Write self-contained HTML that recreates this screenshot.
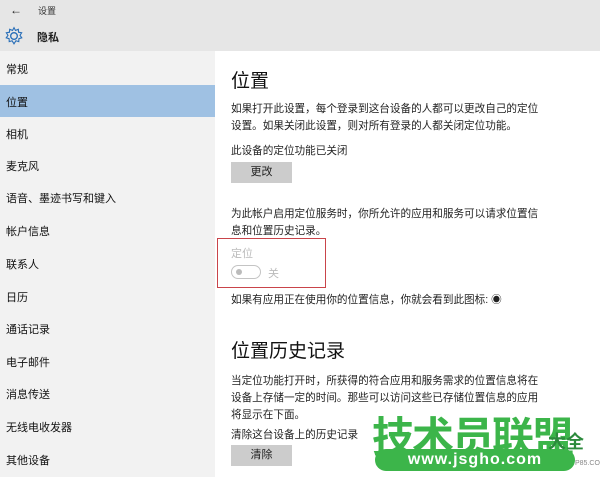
<!DOCTYPE html><html><head><meta charset="utf-8"><style>
*{margin:0;padding:0;box-sizing:border-box}
body{width:600px;height:477px;overflow:hidden;background:#fff;font-family:"Liberation Sans","Noto Sans CJK SC",sans-serif;color:#222;position:relative}
.a{position:absolute;white-space:nowrap}
#top{position:absolute;left:0;top:0;width:600px;height:51px;background:#e6e6e6}
#side{position:absolute;left:0;top:51px;width:215px;height:426px;background:#f2f2f2}
.si{position:absolute;left:6px;font-size:11px;color:#111}
.t{font-size:10.6px;color:#222;left:231px}
.btn{position:absolute;left:231px;width:61px;height:21px;background:#ccc;font-size:11px;text-align:center;line-height:21px}
</style></head><body>
<div id="top"></div>
<div class="a" style="left:10px;top:3px;font-size:12px">←</div>
<div class="a" style="left:38px;top:4px;font-size:9px;color:#333">设置</div>
<svg class="a" style="left:4px;top:26px" width="20" height="20" viewBox="0 0 18 18"><circle cx="9" cy="9" r="3" fill="none" stroke="#2a6fb8" stroke-width="1.2"/><path d="M9 1.5 L10.3 4 L12.9 3 L13.1 5.6 L15.9 6.1 L14.4 8.4 L16 10.6 L13.4 11.4 L13.3 14.1 L10.7 13.3 L9 16 L7.3 13.3 L4.7 14.1 L4.6 11.4 L2 10.6 L3.6 8.4 L2.1 6.1 L4.9 5.6 L5.1 3 L7.7 4 Z" fill="none" stroke="#2a6fb8" stroke-width="1"/></svg>
<div class="a" style="left:37px;top:29px;font-size:11px;font-weight:bold">隐私</div>
<div id="side"></div>
<div class="a" style="left:0;top:85px;width:215px;height:32px;background:#9fc1e3"></div>
<div class="a si" style="top:61px">常规</div>
<div class="a si" style="top:94px">位置</div>
<div class="a si" style="top:126px">相机</div>
<div class="a si" style="top:158px">麦克风</div>
<div class="a si" style="top:190px">语音、墨迹书写和键入</div>
<div class="a si" style="top:223px">帐户信息</div>
<div class="a si" style="top:256px">联系人</div>
<div class="a si" style="top:289px">日历</div>
<div class="a si" style="top:321px">通话记录</div>
<div class="a si" style="top:354px">电子邮件</div>
<div class="a si" style="top:386px">消息传送</div>
<div class="a si" style="top:419px">无线电收发器</div>
<div class="a si" style="top:452px">其他设备</div>

<div class="a" style="left:231px;top:66px;font-size:19px;color:#111">位置</div>
<div class="a t" style="top:101px">如果打开此设置，每个登录到这台设备的人都可以更改自己的定位</div>
<div class="a t" style="top:118px">设置。如果关闭此设置，则对所有登录的人都关闭定位功能。</div>
<div class="a t" style="top:143px">此设备的定位功能已关闭</div>
<div class="btn" style="top:162px">更改</div>
<div class="a t" style="top:206px">为此帐户启用定位服务时，你所允许的应用和服务可以请求位置信</div>
<div class="a t" style="top:223px">息和位置历史记录。</div>
<div class="a" style="left:217px;top:238px;width:109px;height:50px;border:1.5px solid #c9444a"></div>
<div class="a" style="left:231px;top:245px;font-size:11px;color:#bbb">定位</div>
<div class="a" style="left:231px;top:265px;width:30px;height:14px;border:1.5px solid #c4c4c4;border-radius:7px"></div>
<div class="a" style="left:236px;top:269px;width:6px;height:6px;border-radius:3px;background:#bbb"></div>
<div class="a" style="left:268px;top:265px;font-size:11px;color:#bbb">关</div>
<div class="a t" style="top:292px">如果有应用正在使用你的位置信息，你就会看到此图标: ◉</div>
<div class="a" style="left:231px;top:336px;font-size:19px;color:#111">位置历史记录</div>
<div class="a t" style="top:373px">当定位功能打开时，所获得的符合应用和服务需求的位置信息将在</div>
<div class="a t" style="top:390px">设备上存储一定的时间。那些可以访问这些已存储位置信息的应用</div>
<div class="a t" style="top:407px">将显示在下面。</div>
<div class="a t" style="top:427px">清除这台设备上的历史记录</div>
<div class="btn" style="top:445px">清除</div>

<div class="a" style="left:372px;top:404px;font-size:42px;font-weight:bold;color:#3cb54a;letter-spacing:-2px">技术员联盟</div>
<div class="a" style="left:375px;top:449px;width:200px;height:22px;border-radius:11px;background:#3cb54a;color:#fff;font-size:16px;font-weight:bold;line-height:22px;text-align:center;letter-spacing:1px">www.jsgho.com</div>
<div class="a" style="left:548px;top:428px;font-size:18px;color:#2c8a3c;font-weight:bold">大全</div>
<div class="a" style="left:575px;top:460px;font-size:7px;color:#888">P85.COM</div>
</body></html>
